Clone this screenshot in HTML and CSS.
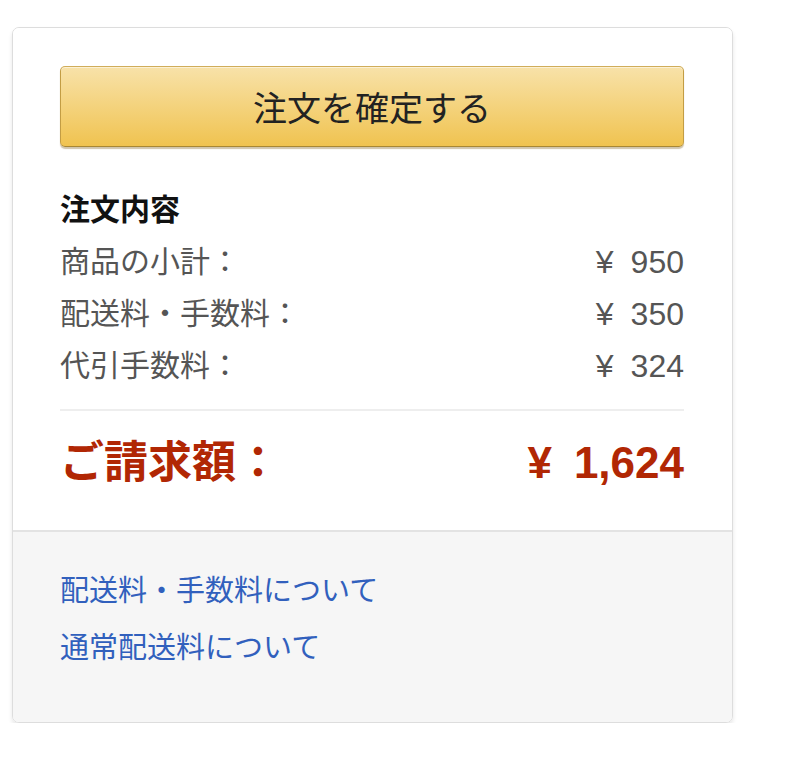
FILE: index.html
```html
<!DOCTYPE html>
<html lang="ja">
<head>
	<meta charset="utf-8">
	<title>注文内容</title>
	<link rel="stylesheet" href="styles.css">
</head>
<body>
	<section class="orderBox">
		<section class="orderBox_main">
			<button class="placeOrderButton" type="button">注文を確定する</button>

			<h3 class="summaryTitle">注文内容</h3>
			<div class="summaryRow"><span>商品の小計：</span><span class="price"><span class="yen">¥</span>950</span></div>
			<div class="summaryRow"><span>配送料・手数料：</span><span class="price"><span class="yen">¥</span>350</span></div>
			<div class="summaryRow"><span>代引手数料：</span><span class="price"><span class="yen">¥</span>324</span></div>

			<hr class="summaryDivider">

			<div class="summaryTotal"><span>ご請求額：</span><span class="price"><span class="yen">¥</span>1,624</span></div>
		</section>

		<section class="orderBox_footer">
			<a class="footerLink" href="#">配送料・手数料について</a>
			<a class="footerLink" href="#">通常配送料について</a>
		</section>
	</section>
</body>
</html>
```

FILE: styles.css
```css
html, body{ margin:0; background-color:#fff; }
body{
	padding:27px 0 0 12px;
	font-family:"Liberation Sans", "Noto Sans CJK JP", sans-serif;
}

.orderBox{
	width:719px;
	border:1px solid #ddd;
	border-radius:7px;
	box-shadow:0 3px 4px rgba(0,0,0,0.1);
	overflow:hidden;
}
.orderBox_main{
	padding:38px 48px 37px 47px;
	background-color:#fff;
}

.placeOrderButton{
	display:block;
	width:100%;
	height:81px;
	margin:0;
	padding:0;
	border:1px solid;
	border-color:#d0ad5a #c39d44 #a88734;
	border-radius:5px;
	background:linear-gradient(to bottom, #f8e2a9, #f0c350);
	box-shadow:0 2px 1px rgba(120,90,20,0.35), inset 0 1px 0 rgba(255,255,255,0.5);
	font-family:inherit;
	font-size:34px;
	color:#222;
}

.summaryTitle{
	margin:37px 0 0 0;
	font-size:30px;
	line-height:52px;
	font-weight:bold;
	color:#111;
}
.summaryRow{
	display:flex;
	justify-content:space-between;
	font-size:30px;
	line-height:52px;
	color:#555;
}
.summaryRow .price{ font-size:32px; }

.yen{ margin-right:17px; }

.summaryDivider{
	margin:17px 0 0 0;
	border:0;
	border-top:2px solid #eee;
}

.summaryTotal{
	display:flex;
	justify-content:space-between;
	margin-top:22px;
	font-size:44px;
	line-height:60px;
	font-weight:bold;
	color:#b12704;
}
.summaryTotal .yen{ margin-right:22px; }

.orderBox_footer{
	display:flex;
	flex-direction:column;
	align-items:flex-start;
	padding:31px 47px 45px 47px;
	background-color:#f6f6f6;
	border-top:2px solid #e3e3e3;
}
.footerLink{
	font-size:29px;
	line-height:57px;
	color:#3160bd;
	text-decoration:none;
}
```
